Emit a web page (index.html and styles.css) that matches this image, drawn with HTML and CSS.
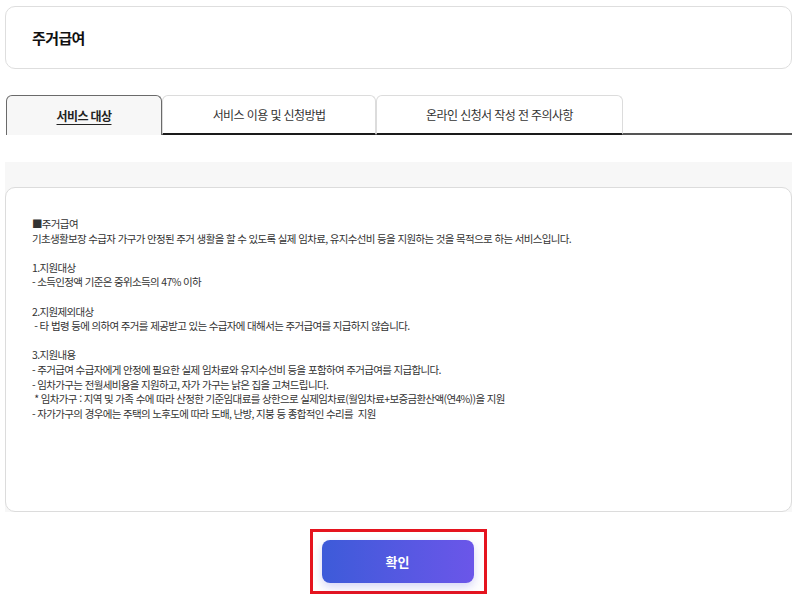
FILE: index.html
```html
<!DOCTYPE html>
<html lang="ko">
<head>
  <meta charset="UTF-8" />
  <meta name="viewport" content="width=device-width, initial-scale=1.0" />
  <title>주거급여</title>
  <link rel="stylesheet" href="styles.css">
</head>
<body>
  <div class="page">
    <div class="title-box">
      <h1>주거급여</h1>
    </div>

    <div class="tabs">
      <div class="tab active"><span>서비스 대상</span></div>
      <div class="tab tab-use">서비스 이용 및 신청방법</div>
      <div class="tab tab-note">온라인 신청서 작성 전 주의사항</div>
      <div class="tab-rest"></div>
    </div>

    <div class="content-wrap">
      <div class="content">
        <p>■주거급여<br>기초생활보장 수급자 가구가 안정된 주거 생활을 할 수 있도록 실제 임차료, 유지수선비 등을 지원하는 것을 목적으로 하는 서비스입니다.</p>
        <p>1.지원대상<br>- 소득인정액 기준은 중위소득의 47% 이하</p>
        <p>2.지원제외대상<br>&nbsp;- 타 법령 등에 의하여 주거를 제공받고 있는 수급자에 대해서는 주거급여를 지급하지 않습니다.</p>
        <p>3.지원내용<br>- 주거급여 수급자에게 안정에 필요한 실제 임차료와 유지수선비 등을 포함하여 주거급여를 지급합니다.<br>- 임차가구는 전월세비용을 지원하고, 자가 가구는 낡은 집을 고쳐드립니다.<br>&nbsp;* 임차가구 : 지역 및 가족 수에 따라 산정한 기준임대료를 상한으로 실제임차료(월임차료+보증금환산액(연4%))을 지원<br>- 자가가구의 경우에는 주택의 노후도에 따라 도배, 난방, 지붕 등 종합적인 수리를&nbsp; 지원</p>
      </div>
    </div>

    <div class="actions">
      <div class="focus-ring">
        <button type="button" class="btn-ok">확인</button>
      </div>
    </div>
  </div>
</body>
</html>
```

FILE: styles.css
```css
body {
  font-family: 'Noto Sans CJK KR', 'Noto Sans', sans-serif;
  background: #ffffff;
  color: #222;
  margin: 0;
  padding: 0;
}
.page {
  padding: 6px 8px 0 5px;
}
.title-box {
  height: 61px;
  border: 1px solid #dedede;
  border-radius: 10px;
  display: flex;
  align-items: center;
  padding-left: 26px;
}
h1 {
  margin: 0;
  font-size: 15px;
  font-weight: 700;
  letter-spacing: -0.6px;
  color: #111;
}
.tabs {
  display: flex;
  margin-top: 26px;
  padding-left: 1px;
  height: 40px;
}
.tab {
  box-sizing: border-box;
  height: 40px;
  display: flex;
  align-items: center;
  justify-content: center;
  font-size: 12px;
  letter-spacing: -0.6px;
  color: #333;
  border: 1px solid #dcdcdc;
  border-bottom: 2px solid #1a1a1a;
  border-radius: 6px 6px 0 0;
  background: #fff;
}
.tab.active {
  width: 156px;
  background: #f7f7f7;
  border-color: #6a6a6a;
  border-bottom: none;
  font-weight: 700;
  color: #222;
}
.tab.active span {
  text-decoration: underline;
  text-underline-offset: 3px;
}
.tab-use {
  width: 214px;
}
.tab-note {
  width: 247px;
}
.tab-rest {
  flex: 1;
  border-bottom: 2px solid #555;
}
.content-wrap {
  margin-top: 27px;
  background: #f7f7f7;
  padding-top: 25px;
}
.content {
  box-sizing: border-box;
  height: 325px;
  background: #fff;
  border: 1px solid #dcdcdc;
  border-radius: 10px;
  padding: 29px 26px;
  font-size: 10.5px;
  line-height: 14.6px;
  letter-spacing: -0.65px;
  color: #333;
}
.content p {
  margin: 0 0 14.6px;
}
.actions {
  display: flex;
  justify-content: center;
  padding-top: 17px;
  padding-right: 1px;
}
.focus-ring {
  border: 3px solid #e5141f;
  padding: 8px 10px 8px 9px;
}
.btn-ok {
  display: block;
  width: 152px;
  height: 43px;
  border: none;
  border-radius: 8px;
  background: linear-gradient(to right, #3d5bd9, #6b56e9);
  color: #fff;
  font-family: inherit;
  font-size: 13px;
  font-weight: 700;
  box-shadow: 0 4px 10px rgba(90, 90, 220, 0.25);
  cursor: pointer;
}
```
